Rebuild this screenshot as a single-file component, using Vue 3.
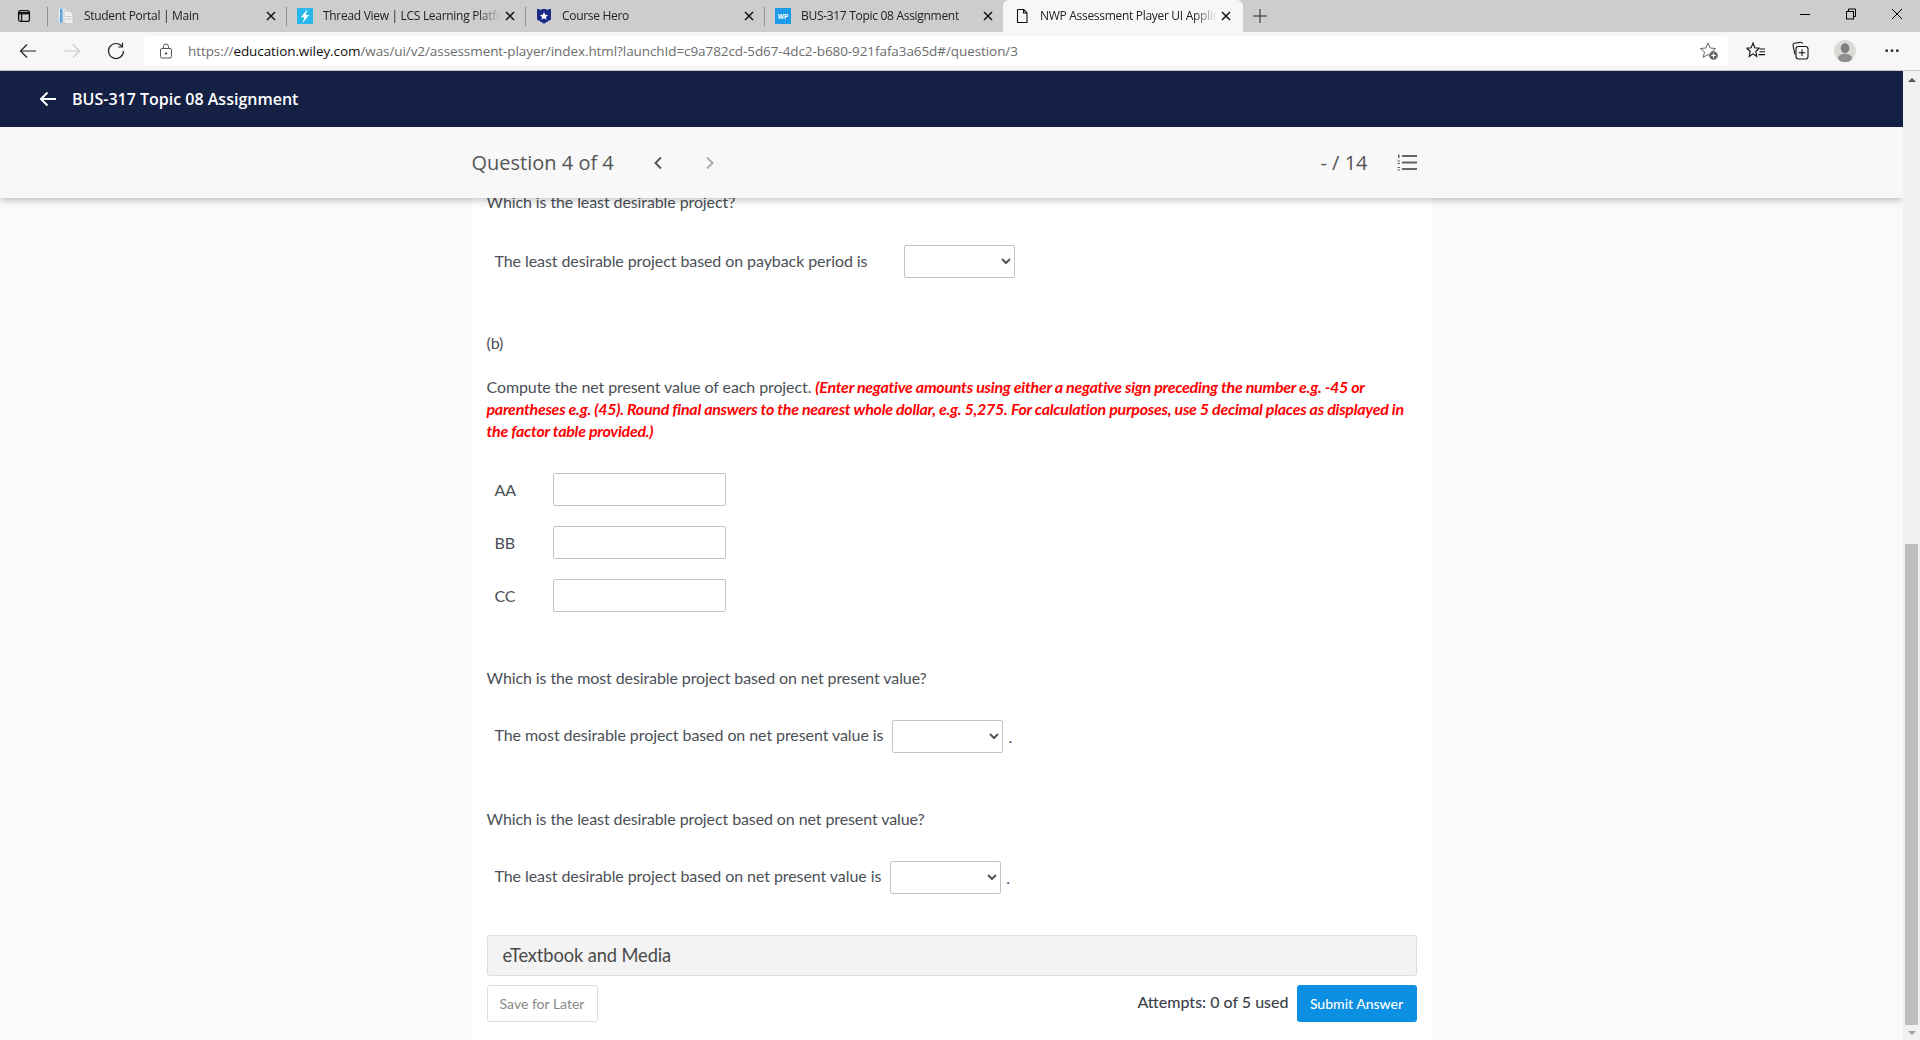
<script setup>
const tabs = [
  { title: 'Student Portal | Main', icon: 'doc' },
  { title: 'Thread View | LCS Learning Platform', icon: 'bolt' },
  { title: 'Course Hero', icon: 'shield' },
  { title: 'BUS-317 Topic 08 Assignment', icon: 'wp' },
  { title: 'NWP Assessment Player UI Application', icon: 'page', active: true },
]
const amounts = ['AA', 'BB', 'CC']
</script>

<template>
  <div class="window">
    <div class="tabstrip">
      <div class="sidebar-btn">
        <svg width="16" height="16" viewBox="0 0 16 16" fill="none" stroke="#111" stroke-width="1.3">
          <rect x="2.6" y="2.6" width="10.8" height="10.8" rx="2" />
          <path d="M2.6 5.2h10.8" stroke-width="2.4" />
          <path d="M5.6 5v8.4" />
        </svg>
      </div>
      <div v-for="tab in tabs" :key="tab.title" class="tab" :class="{ active: tab.active }">
        <span class="tab-icon">
          <svg v-if="tab.icon === 'doc'" width="16" height="16" viewBox="0 0 16 16">
            <rect x="0.5" y="0.5" width="8" height="14" fill="#e4edf5" stroke="#c3d3e2" />
            <rect x="2" y="1" width="2.5" height="13.500" fill="#5fa3dc" />
            <path d="M6 3h6l3 3v9.500H6z" fill="#f0f0f0" stroke="#c8c8c8" />
            <path d="M7.500 8.500h6M7.500 11h6" stroke="#c8c8c8" />
          </svg>
          <svg v-else-if="tab.icon === 'bolt'" width="16" height="16" viewBox="0 0 16 16">
            <rect width="16" height="16" fill="#29b6ea" />
            <path d="M10.500 1 4 9.200h3.400L5.600 15l6.600-8H8.700z" fill="#fff" />
          </svg>
          <svg v-else-if="tab.icon === 'shield'" width="16" height="16" viewBox="0 0 16 16">
            <path d="M1 0.800 5 1.800 8 0.800l3 1 4-1V11.500L8 15.800 1 11.500z" fill="#1a2a86" />
            <path d="m8 4 1.200 2.700 2.900.3-2.200 1.900.7 2.800L8 10.200l-2.600 1.500.7-2.800L3.900 7l2.900-.3z" fill="#fff" />
          </svg>
          <svg v-else-if="tab.icon === 'wp'" width="16" height="16" viewBox="0 0 16 16">
            <rect width="16" height="16" fill="#1e9be8" />
            <text x="8" y="10.500" text-anchor="middle" font-size="6.500" font-weight="700" font-family="'Liberation Sans', sans-serif" fill="#fff">WP</text>
          </svg>
          <svg v-else width="16" height="16" viewBox="0 0 16 16" fill="none" stroke="#111" stroke-width="1.1">
            <path d="M3.500 1.500h6l3.500 3.500v9.500h-9.500z" stroke-linejoin="round" />
            <path d="M9.500 1.500v3.500h3.500" />
          </svg>
        </span>
        <span class="tab-title">{{ tab.title }}</span>
        <svg class="tab-close" width="10" height="10" viewBox="0 0 10 10" stroke="#111" stroke-width="1.500">
          <path d="m1 1 8 8M9 1 1 9" />
        </svg>
      </div>
      <svg class="new-tab" width="14" height="14" viewBox="0 0 14 14" stroke="#222" stroke-width="1">
        <path d="M7 0v14M0 7h14" />
      </svg>
      <div class="caption">
        <svg width="12" height="12" viewBox="0 0 12 12" stroke="#000" fill="none"><path d="M1 6.500h10" /></svg>
        <svg width="12" height="12" viewBox="0 0 12 12" stroke="#000" fill="none">
          <rect x="1.500" y="3.500" width="7" height="7.500" /><path d="M3.500 3.500v-2.500h7v7.500h-2" />
        </svg>
        <svg width="12" height="12" viewBox="0 0 12 12" stroke="#000" fill="none"><path d="m1 1 10 10M11 1 1 11" /></svg>
      </div>
    </div>

    <div class="toolbar">
      <svg class="tool back" width="18" height="18" viewBox="0 0 18 18" fill="none" stroke="#222" stroke-width="1.200">
        <path d="M17 9H1.500M8 2.500 1.500 9 8 15.500" />
      </svg>
      <svg class="tool forward" width="18" height="18" viewBox="0 0 18 18" fill="none" stroke="#c9c9c9" stroke-width="1.200">
        <path d="M1 9h15.500M10 2.500 16.500 9 10 15.500" />
      </svg>
      <svg class="tool reload" width="18" height="18" viewBox="0 0 18 18" fill="none" stroke="#222" stroke-width="1.200">
        <path d="M15 4.500A7.500 7.500 0 1 0 16.500 9" /><path d="M15.500 0.800v4.200h-4.200" />
      </svg>
      <div class="address">
        <svg class="lock" width="14" height="16" viewBox="0 0 14 16" fill="none" stroke="#555" stroke-width="1">
          <rect x="1.500" y="5.500" width="11" height="9.500" rx="1.500" />
          <path d="M4.500 5.500V3.500a2.500 2.500 0 0 1 5 0v2" />
          <circle cx="7" cy="10.500" r="0.800" fill="#555" />
        </svg>
        <span class="url">https://<b>education.wiley.com</b>/was/ui/v2/assessment-player/index.html?launchId=c9a782cd-5d67-4dc2-b680-921fafa3a65d#/question/3</span>
        <svg class="star" width="20" height="20" viewBox="0 0 20 20" fill="none" stroke="#666" stroke-width="1">
          <path d="m9 2 2.200 5 5.300.500-4 3.500 1.200 5.200L9 13.500l-4.700 2.700 1.200-5.200-4-3.500 5.300-.500z" />
          <circle cx="14.500" cy="14.500" r="4.300" fill="#666" stroke="none" />
          <path d="M14.500 12.300v4.400M12.300 14.500h4.400" stroke="#fff" stroke-width="1.200" />
        </svg>
      </div>
      <svg class="tool favs" width="20" height="20" viewBox="0 0 20 20" fill="none" stroke="#111" stroke-width="1.100">
        <path d="m7 2 1.800 4.800 4.200.4-3.200 3.300 1 5L7 12.800l-3.800 2.700 1-5L1 7.200l4.200-.4z" />
        <path d="M13.500 8h5.500M13.500 10.800h5.500M12.500 13.600h6.500" />
      </svg>
      <svg class="tool collect" width="20" height="20" viewBox="0 0 20 20" fill="none" stroke="#111" stroke-width="1.100">
        <path d="M5 13.500 3 4.500q-.3-1.800 1.500-2.200l6-1q1.700-.2 2.200 1.400" />
        <rect x="6" y="5.500" width="12" height="12.500" rx="2.500" />
        <path d="M12 8.500v6.500M8.800 11.700h6.400" />
      </svg>
      <svg class="tool avatar" width="22" height="22" viewBox="0 0 22 22">
        <circle cx="11" cy="11" r="11" fill="#d9d9d6" />
        <ellipse cx="11" cy="8.300" rx="4.300" ry="5" fill="#7e7e7e" />
        <ellipse cx="11" cy="18" rx="7" ry="4.200" fill="#8f8f8f" />
      </svg>
      <svg class="tool dots" width="14" height="4" viewBox="0 0 14 4" fill="#222">
        <rect x="0.500" y="0.500" width="2.400" height="2.400" /><rect x="5.800" y="0.500" width="2.400" height="2.400" /><rect x="11.100" y="0.500" width="2.400" height="2.400" />
      </svg>
    </div>

    <div class="viewport">
      <div class="page">
        <header class="assign-bar">
          <svg width="18" height="18" viewBox="0 0 18 18" fill="none" stroke="#fff" stroke-width="2">
            <path d="M17 9H2M8.500 2.500 2 9l6.500 6.500" />
          </svg>
          <span>BUS-317 Topic 08 Assignment</span>
        </header>
        <div class="question-bar">
          <div class="question-inner">
            <span class="q-count">Question 4 of 4</span>
            <svg class="chev prev" width="10" height="14" viewBox="0 0 10 14" fill="none" stroke="#555" stroke-width="2">
              <path d="M8 1.500 2.500 7 8 12.500" />
            </svg>
            <svg class="chev next" width="10" height="14" viewBox="0 0 10 14" fill="none" stroke="#aaa" stroke-width="2">
              <path d="M2 1.500 7.500 7 2 12.500" />
            </svg>
            <span class="score">- / 14</span>
            <svg class="list-icon" width="20" height="17" viewBox="0 0 20 17" fill="#666">
              <rect x="5" y="1" width="15" height="2" /><rect x="5" y="7.500" width="15" height="2" /><rect x="5" y="14" width="15" height="2" />
              <rect x="1" y="0.500" width="1.500" height="3.500" /><rect x="0.500" y="6.500" width="2.500" height="1" /><rect x="0.500" y="9" width="2.500" height="1" />
              <rect x="0.500" y="13" width="2.500" height="1" /><rect x="0.500" y="15.500" width="2.500" height="1" />
            </svg>
          </div>
        </div>
        <main class="content">
          <p class="question-line">Which is the least desirable project?</p>
          <div class="answer-row first">
            <span>The least desirable project based on payback period is</span>
            <select class="pick wide-gap"></select>
          </div>

          <p class="part">(b)</p>
          <p class="prompt">
            Compute the net present value of each project.
            <em>(Enter negative amounts using either a negative sign preceding the number e.g. -45 or parentheses e.g. (45). Round final answers to the nearest whole dollar, e.g. 5,275. For calculation purposes, use 5 decimal places as displayed in the factor table provided.)</em>
          </p>

          <div class="amounts">
            <label v-for="name in amounts" :key="name" class="amount">
              <span>{{ name }}</span>
              <input type="text" />
            </label>
          </div>

          <p class="question-line most">Which is the most desirable project based on net present value?</p>
          <div class="answer-row">
            <span>The most desirable project based on net present value is</span>
            <select class="pick"></select>
            <span class="dot">.</span>
          </div>

          <p class="question-line least">Which is the least desirable project based on net present value?</p>
          <div class="answer-row">
            <span>The least desirable project based on net present value is</span>
            <select class="pick"></select>
            <span class="dot">.</span>
          </div>

          <div class="media">eTextbook and Media</div>
          <div class="actions">
            <button class="save">Save for Later</button>
            <span class="attempts">Attempts: 0 of 5 used</span>
            <button class="submit">Submit Answer</button>
          </div>
        </main>
      </div>
      <div class="scrollbar">
        <div class="arrow up"></div>
        <div class="thumb"></div>
        <div class="arrow down"></div>
      </div>
    </div>
  </div>
</template>

<style scoped>
.window {
  display: flex;
  flex-direction: column;
  height: 1040px;
  overflow: hidden;
  font-family: Lato, "Liberation Sans", sans-serif;
  color: #4a5056;
}

/* browser chrome */
.tabstrip {
  display: flex;
  align-items: center;
  height: 32px;
  background: #cdcdcd;
}
.sidebar-btn {
  display: flex;
  justify-content: center;
  width: 47px;
  flex: none;
}
.tab {
  position: relative;
  display: flex;
  align-items: center;
  width: 239px;
  height: 32px;
  padding: 0 11px;
  box-sizing: border-box;
  flex: none;
}
.tab::before {
  content: "";
  position: absolute;
  left: 0;
  top: 7px;
  height: 19px;
  width: 1px;
  background: #8f8f8f;
}
.tab.active {
  width: 240px;
  background: #f7f7f7;
  border-radius: 6px 6px 0 0;
}
.tab.active::before {
  display: none;
}
.tab-icon {
  display: flex;
  width: 26px;
  flex: none;
}
.tab-title {
  flex: 1;
  min-width: 0;
  overflow: hidden;
  white-space: nowrap;
  font: 12px "Open Sans", sans-serif;
  letter-spacing: -0.3px;
  line-height: 16px;
  margin-top: -1px;
  color: #222;
  -webkit-mask-image: linear-gradient(to right, #000 calc(100% - 28px), transparent calc(100% - 4px));
  mask-image: linear-gradient(to right, #000 calc(100% - 28px), transparent calc(100% - 4px));
}
.tab-close {
  flex: none;
  margin-right: -1px;
}
.tab.active .tab-close {
  margin-right: 1px;
}
.new-tab {
  margin-left: 10px;
}
.caption {
  display: flex;
  gap: 34px;
  margin-left: auto;
  margin-right: 17px;
  margin-top: -4px;
}
.toolbar {
  display: flex;
  align-items: center;
  height: 38px;
  flex: none;
  background: #f7f7f7;
  border-bottom: 1px solid #c6c6c6;
}
.tool {
  flex: none;
}
.back { margin-left: 19px; }
.forward { margin-left: 26px; }
.reload { margin-left: 26px; }
.address {
  display: flex;
  align-items: center;
  width: 1584px;
  height: 30px;
  margin-left: 19px;
  background: #fff;
  border-radius: 4px;
  flex: none;
}
.lock {
  margin-left: 15px;
}
.url {
  margin-left: 15px;
  font: 13.500px "Open Sans", sans-serif;
  letter-spacing: -0.08px;
  color: #6d6d6d;
  white-space: nowrap;
}
.url b {
  font-weight: 400;
  color: #111;
}
.star {
  margin-left: auto;
  margin-right: 9px;
}
.favs { margin-left: 18px; }
.collect { margin-left: 24px; }
.avatar { margin-left: 24px; }
.dots { margin-left: 29px; }

/* page */
.viewport {
  display: flex;
  flex: 1;
  min-height: 0;
}
.page {
  flex: 1;
  min-width: 0;
  background: #fafafa;
  overflow: hidden;
}
.assign-bar {
  display: flex;
  align-items: center;
  gap: 15px;
  height: 56px;
  padding-left: 39px;
  background: #142044;
  color: #fff;
  font: 600 16px "Open Sans", sans-serif;
}
.question-bar {
  position: relative;
  z-index: 1;
  height: 71px;
  background: #f8f8f8;
  box-shadow: 0 2px 8px rgba(0, 0, 0, 0.25);
}
.question-inner {
  display: flex;
  align-items: center;
  width: 960px;
  height: 100%;
  margin: 0 auto;
  color: #555;
  font: 20px "Open Sans", sans-serif;
}
.prev { margin-left: 39px; }
.next { margin-left: 42px; }
.score { margin-left: auto; margin-right: 29px; }
.list-icon { margin-right: 15px; }
.content {
  width: 960px;
  box-sizing: border-box;
  height: 900px;
  margin: -7px auto 0;
  padding: 0 15px;
  background: #fff;
  font-size: 16px;
  line-height: 22px;
  letter-spacing: -0.1px;
}
.content p {
  margin: 0;
}
.answer-row {
  display: flex;
  align-items: center;
  height: 33px;
  padding-left: 8px;
  margin-top: 31px;
  letter-spacing: -0.08px;
}
.answer-row.first {
  margin-top: 32px;
}
.answer-row > span:first-child {
  margin-top: -3px;
}
.answer-row.first > span:first-child {
  margin-top: -1px;
}
.pick {
  width: 111px;
  height: 33px;
  margin-left: 9px;
  box-sizing: border-box;
  background: #fff;
  color: #555;
  border: 1px solid #c4c4c4;
  border-radius: 2px;
}
.pick.wide-gap {
  margin-left: 37px;
}
.dot {
  margin-left: 5px;
}
.part {
  margin-top: 54px !important;
}
.prompt {
  margin-top: 22px !important;
}
.prompt em {
  font-weight: 700;
  font-style: italic;
  color: #f00;
  letter-spacing: -0.27px;
}
.amounts {
  display: flex;
  flex-direction: column;
  gap: 20px;
  margin-top: 31px;
}
.amount {
  display: flex;
  align-items: center;
  padding-left: 8px;
}
.amount span {
  width: 58px;
}
.amount input {
  width: 173px;
  height: 33px;
  box-sizing: border-box;
  border: 1px solid #c4c4c4;
  border-radius: 2px;
}
.question-line.most {
  margin-top: 55px;
}
.question-line.least {
  margin-top: 55px;
}
.media {
  height: 41px;
  margin-top: 41px;
  padding-left: 15px;
  box-sizing: border-box;
  background: #f3f3f3;
  border: 1px solid #ddd;
  border-radius: 3px;
  font-size: 18.300px;
  line-height: 39px;
  color: #4a4a4a;
}
.actions {
  display: flex;
  align-items: center;
  margin-top: 9px;
}
.save {
  width: 111px;
  height: 37px;
  background: #fff;
  border: 1px solid #ddd;
  border-radius: 3px;
  font: 14px Lato, sans-serif;
  color: #888;
}
.attempts {
  margin-left: auto;
  margin-right: 8px;
  margin-top: -3px;
  font-weight: 500;
  letter-spacing: 0;
  color: #3c424a;
}
.submit {
  width: 120px;
  height: 37px;
  background: #0a8fe3;
  border: none;
  border-radius: 3px;
  font: 500 14px Lato, sans-serif;
  color: #fff;
}

/* fake scrollbar */
.scrollbar {
  display: flex;
  flex-direction: column;
  width: 17px;
  flex: none;
  background: #f1f1f1;
}
.arrow {
  display: flex;
  justify-content: center;
  align-items: center;
  flex: none;
}
.arrow.up { height: 17px; }
.arrow.down { height: 15px; }
.arrow::before {
  content: "";
  border-left: 4px solid transparent;
  border-right: 4px solid transparent;
}
.arrow.up::before { border-bottom: 4px solid #505050; }
.arrow.down::before { border-top: 4px solid #a3a3a3; }
.thumb {
  width: 13px;
  height: 481px;
  margin: auto 2px 0;
  background: #bebebe;
}
</style>
